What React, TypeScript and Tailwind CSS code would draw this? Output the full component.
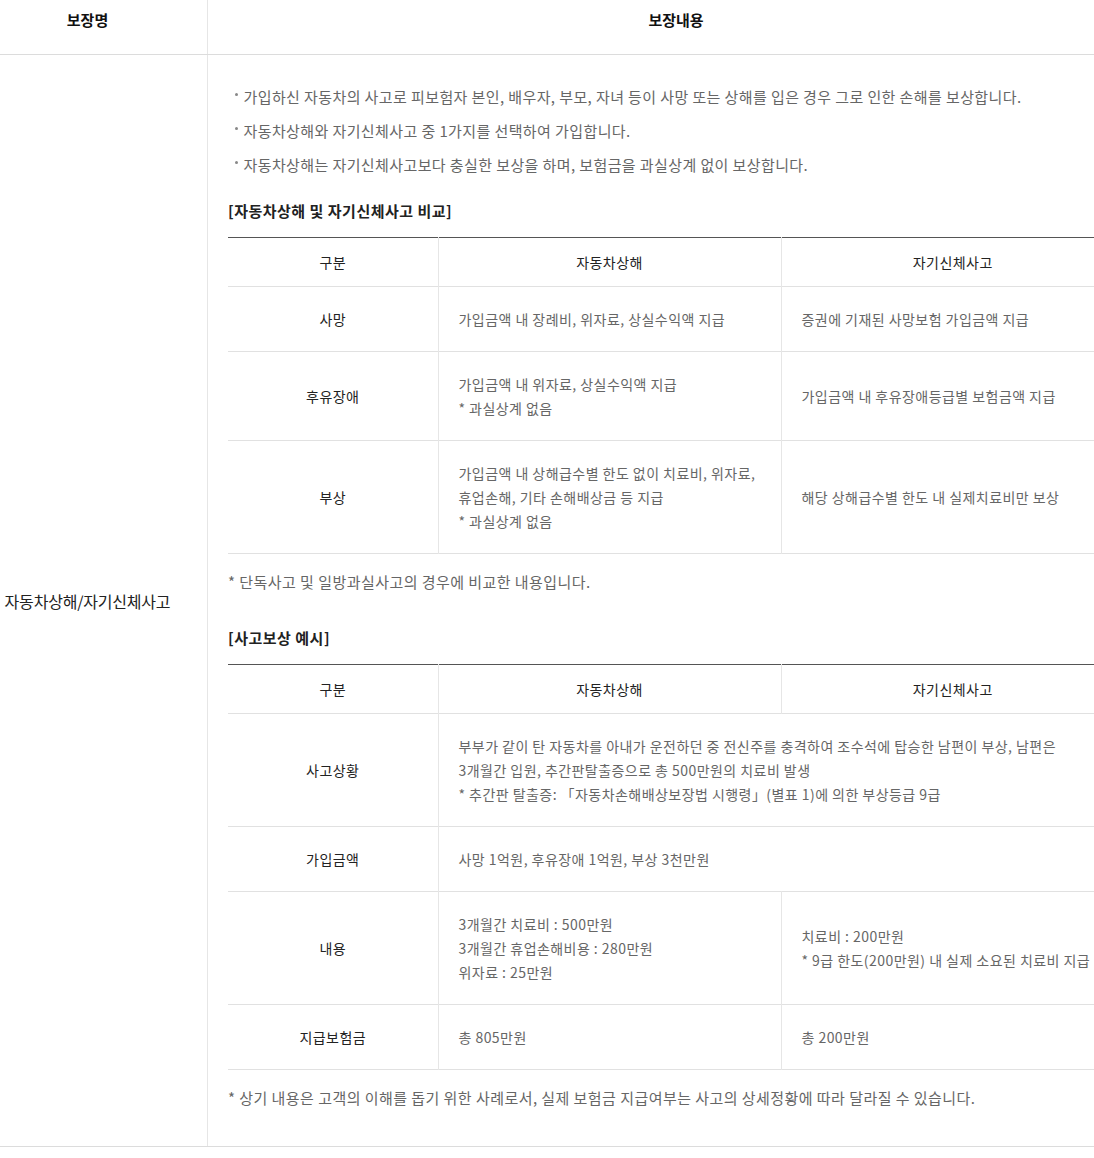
import React from 'react'

type Cell = { lines: string[]; span?: number }
type Row = { label: string; cells: Cell[] }

const compareRows: Row[] = [
  {
    label: '사망',
    cells: [
      { lines: ['가입금액 내 장례비, 위자료, 상실수익액 지급'] },
      { lines: ['증권에 기재된 사망보험 가입금액 지급'] },
    ],
  },
  {
    label: '후유장애',
    cells: [
      { lines: ['가입금액 내 위자료, 상실수익액 지급', '* 과실상계 없음'] },
      { lines: ['가입금액 내 후유장애등급별 보험금액 지급'] },
    ],
  },
  {
    label: '부상',
    cells: [
      {
        lines: [
          '가입금액 내 상해급수별 한도 없이 치료비, 위자료,',
          '휴업손해, 기타 손해배상금 등 지급',
          '* 과실상계 없음',
        ],
      },
      { lines: ['해당 상해급수별 한도 내 실제치료비만 보상'] },
    ],
  },
]

const exampleRows: Row[] = [
  {
    label: '사고상황',
    cells: [
      {
        span: 2,
        lines: [
          '부부가 같이 탄 자동차를 아내가 운전하던 중 전신주를 충격하여 조수석에 탑승한 남편이 부상, 남편은',
          '3개월간 입원, 추간판탈출증으로 총 500만원의 치료비 발생',
          '* 추간판 탈출증: 「자동차손해배상보장법 시행령」(별표 1)에 의한 부상등급 9급',
        ],
      },
    ],
  },
  {
    label: '가입금액',
    cells: [{ span: 2, lines: ['사망 1억원, 후유장애 1억원, 부상 3천만원'] }],
  },
  {
    label: '내용',
    cells: [
      {
        lines: [
          '3개월간 치료비 : 500만원',
          '3개월간 휴업손해비용 : 280만원',
          '위자료 : 25만원',
        ],
      },
      {
        lines: ['치료비 : 200만원', '* 9급 한도(200만원) 내 실제 소요된 치료비 지급'],
      },
    ],
  },
  {
    label: '지급보험금',
    cells: [{ lines: ['총 805만원'] }, { lines: ['총 200만원'] }],
  },
]

const CompareTable = ({ rows }: { rows: Row[] }) => (
  <table className="w-[896px] table-fixed border-collapse border-t border-t-[#555] text-[14px] leading-[24px] tracking-[0.45px]">
    <colgroup>
      <col className="w-[210px]" />
      <col className="w-[343px]" />
      <col className="w-[343px]" />
    </colgroup>
    <thead>
      <tr className="border-b border-[#e1e1e1]">
        <th className="h-[48px] py-[12px] text-center font-normal text-[#222]">구분</th>
        <th className="border-l border-[#e6e6e6] py-[12px] text-center font-normal text-[#222]">
          자동차상해
        </th>
        <th className="border-l border-[#e6e6e6] py-[12px] text-center font-normal text-[#222]">
          자기신체사고
        </th>
      </tr>
    </thead>
    <tbody>
      {rows.map((row) => (
        <tr key={row.label} className="border-b border-[#e1e1e1]">
          <td className="py-[20px] text-center text-[#222]">{row.label}</td>
          {row.cells.map((cell, i) => (
            <td
              key={i}
              colSpan={cell.span}
              className="border-l border-[#e6e6e6] px-[20px] py-[20px] text-left whitespace-nowrap text-[#666]"
            >
              {cell.lines.map((line) => (
                <div key={line}>{line}</div>
              ))}
            </td>
          ))}
        </tr>
      ))}
    </tbody>
  </table>
)

const bullets = [
  '가입하신 자동차의 사고로 피보험자 본인, 배우자, 부모, 자녀 등이 사망 또는 상해를 입은 경우 그로 인한 손해를 보상합니다.',
  '자동차상해와 자기신체사고 중 1가지를 선택하여 가입합니다.',
  '자동차상해는 자기신체사고보다 충실한 보상을 하며, 보험금을 과실상계 없이 보상합니다.',
]

export default function App() {
  return (
    <div className="w-full overflow-hidden bg-white font-['Noto_Sans_CJK_KR','Noto_Sans',sans-serif]">
      <div className="-ml-[32px] w-[1176px] border-b border-[#dcdcdc]">
        <div className="grid grid-cols-[240px_936px] border-b border-[#dcdcdc]">
          <div className="h-[54px] border-r border-[#e6e6e6] pt-[8px] text-center text-[15px] font-bold leading-[24px] text-[#111]">
            보장명
          </div>
          <div className="pt-[8px] text-center text-[15px] font-bold leading-[24px] text-[#111]">
            보장내용
          </div>
        </div>
        <div className="grid grid-cols-[240px_936px]">
          <div className="flex items-center justify-center border-r border-[#e6e6e6] text-[16px] tracking-[-0.2px] text-[#222]">
            자동차상해/자기신체사고
          </div>
          <div className="px-[20px] pt-[30px] pb-[36px]">
            <ul className="flex flex-col gap-[10px] text-[15px] leading-[24px] tracking-[0.4px] text-[#666]">
              {bullets.map((b) => (
                <li key={b} className="flex items-start">
                  <span className="mt-[8px] ml-[7px] mr-[6px] h-[2.5px] w-[2.5px] shrink-0 rounded-full bg-[#888]" />
                  <span className="whitespace-nowrap">{b}</span>
                </li>
              ))}
            </ul>
            <h3 className="mt-[22px] mb-[14px] text-[15px] font-bold leading-[24px] tracking-[0.5px] text-[#222]">
              [자동차상해 및 자기신체사고 비교]
            </h3>
            <CompareTable rows={compareRows} />
            <p className="mt-[16px] whitespace-nowrap text-[15px] leading-[24px] tracking-[0.45px] text-[#666]">
              * 단독사고 및 일방과실사고의 경우에 비교한 내용입니다.
            </p>
            <h3 className="mt-[32px] mb-[14px] text-[15px] font-bold leading-[24px] tracking-[0.5px] text-[#222]">
              [사고보상 예시]
            </h3>
            <CompareTable rows={exampleRows} />
            <p className="mt-[16px] whitespace-nowrap text-[15px] leading-[24px] tracking-[0.45px] text-[#666]">
              * 상기 내용은 고객의 이해를 돕기 위한 사례로서, 실제 보험금 지급여부는 사고의 상세정황에 따라 달라질 수 있습니다.
            </p>
          </div>
        </div>
      </div>
    </div>
  )
}
